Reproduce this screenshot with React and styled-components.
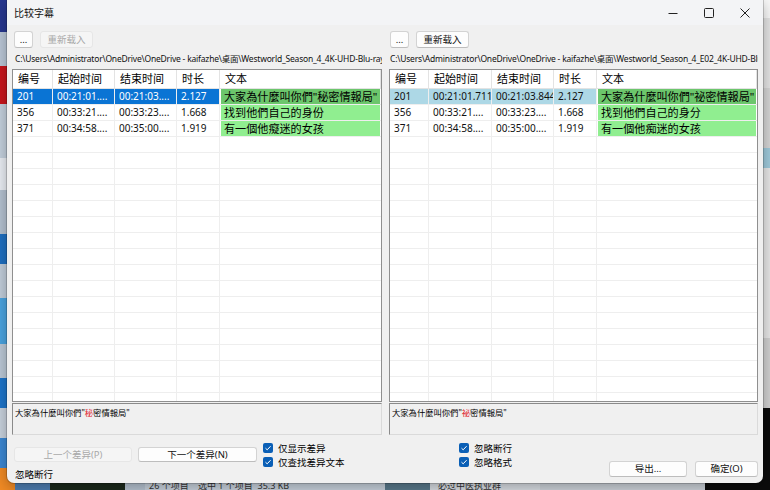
import React from 'react';
import styled, { createGlobalStyle } from 'styled-components';

const GlobalStyle = createGlobalStyle`
  html, body { margin: 0; padding: 0; width: 770px; height: 490px; overflow: hidden; }
  body { font-family: "Noto Sans", "Noto Sans CJK SC", sans-serif; color: #000; }
  #root { width: 770px; height: 490px; }
`;

const CJK = `"Noto Sans", "Noto Sans CJK SC", sans-serif`;

const Desktop = styled.div`
  position: relative;
  width: 770px;
  height: 490px;
  overflow: hidden;
  background: #dde2e8;
`;

const LeftStrip = styled.div`
  position: absolute;
  left: 0; top: 0;
  width: 10px; height: 490px;
  display: flex;
  flex-direction: column;
`;

const RightStrip = styled.div`
  position: absolute;
  right: 0; top: 0;
  width: 12px; height: 490px;
  display: flex;
  flex-direction: column;
`;

const BottomStrip = styled.div`
  position: absolute;
  left: 0; bottom: 0;
  width: 770px; height: 12px;
  display: flex;
`;

const Block = styled.div`
  flex: 0 0 ${p => p.$s}px;
  background: ${p => p.$c};
  font-size: 9px;
  line-height: 16px;
  color: #333;
  white-space: nowrap;
  overflow: hidden;
  padding-left: ${p => p.$pad || 0}px;
  box-sizing: border-box;
  font-family: ${CJK};
`;

const Dialog = styled.div`
  position: absolute;
  left: 7px;
  top: 0;
  width: 756px;
  height: 483px;
  background: #f0f0f0;
  border-radius: 0 0 7px 7px;
  box-shadow: 0 0 0 1px rgba(0,0,0,0.18), 0 4px 14px rgba(0,0,0,0.3);
  display: flex;
  flex-direction: column;
  overflow: hidden;
`;

const TitleBar = styled.div`
  height: 25px;
  flex: 0 0 25px;
  background: #f3f4f6;
  display: flex;
  align-items: center;
  padding-left: 7px;
`;

const Title = styled.div`
  font-family: ${CJK};
  font-size: 10px;
  color: #111;
  flex: 1;
`;

const WinBtn = styled.div`
  width: 36px;
  height: 25px;
  display: flex;
  align-items: center;
  justify-content: center;
`;

const Panels = styled.div`
  display: flex;
  gap: 7px;
  padding: 6px 5px 0 5px;
`;

const Panel = styled.div`
  width: ${p => p.$w}px;
  flex: 0 0 ${p => p.$w}px;
  display: flex;
  flex-direction: column;
  min-width: 0;
`;

const Toolbar = styled.div`
  display: flex;
  gap: 7px;
  padding-left: ${p => p.$pl}px;
  height: 17px;
`;

const Button = styled.button`
  box-sizing: border-box;
  width: ${p => p.$w}px;
  height: ${p => p.$h || 17}px;
  padding: 0;
  font-family: ${CJK};
  font-size: 9.5px;
  line-height: 1;
  color: ${p => (p.disabled ? '#a8a8a8' : '#111')};
  background: ${p => (p.disabled ? '#f5f5f5' : '#fdfdfd')};
  border: 1px solid ${p => (p.disabled ? '#e6e6e6' : '#d3d3d3')};
  border-bottom-color: ${p => (p.disabled ? '#e6e6e6' : '#bdbdbd')};
  border-radius: 3px;
  display: flex;
  align-items: center;
  justify-content: center;
`;

const PathText = styled.div`
  margin-top: 5px;
  height: 12px;
  font-size: 8.5px;
  line-height: 12px;
  letter-spacing: -0.2px;
  white-space: nowrap;
  overflow: hidden;
  padding-left: ${p => p.$pl}px;
  color: #111;
  font-family: ${CJK};
`;

const List = styled.div`
  margin-top: 4px;
  height: 333px;
  box-sizing: border-box;
  border: 1px solid #8f8f8f;
  background: #fff;
  overflow: hidden;
  display: flex;
  flex-direction: column;
`;

const Row = styled.div`
  display: grid;
  grid-template-columns: ${p => p.$cols};
  height: ${p => p.$h}px;
  flex: 0 0 ${p => p.$h}px;
  box-sizing: border-box;
  border-bottom: 1px solid ${p => (p.$header ? '#e3e3e3' : '#eeeeee')};
`;

const HeadCell = styled.div`
  font-family: ${CJK};
  font-size: 11px;
  line-height: 18px;
  padding-left: 5px;
  border-right: 1px solid #e3e3e3;
  white-space: nowrap;
  overflow: hidden;
`;

const Cell = styled.div`
  font-size: 10px;
  line-height: 15px;
  padding-left: 4px;
  border-right: ${p => (p.$last ? 'none' : '1px solid #eeeeee')};
  white-space: nowrap;
  overflow: hidden;
  background: ${p => p.$bg || 'transparent'};
  color: ${p => p.$fg || '#111'};
`;

const TextCell = styled.div`
  font-family: ${CJK};
  font-size: 11.1px;
  line-height: 15px;
  padding-left: 3px;
  margin-left: 1px;
  margin-right: 1px;
  white-space: nowrap;
  overflow: hidden;
  background: ${p => p.$bg || 'transparent'};
`;

const Detail = styled.div`
  margin-top: 1px;
  height: 32px;
  box-sizing: border-box;
  border: 1px solid #dadada;
  border-top-color: #8a8a8a;
  border-left-color: #8a8a8a;
  background: #f0f0f0;
  font-family: ${CJK};
  font-size: 8.3px;
  line-height: 10px;
  padding: 4px 2px;
  white-space: nowrap;
  overflow: hidden;
`;

const Red = styled.span`
  color: #e0202a;
`;

const BottomBar = styled.div`
  flex: 1;
  display: flex;
  padding: 0 5px 0 7px;
`;

const ColA = styled.div`
  width: 243px;
  flex: 0 0 243px;
  display: flex;
  flex-direction: column;
`;

const BtnRow = styled.div`
  margin-top: 12px;
  display: flex;
  gap: 6px;
`;

const BottomLabel = styled.div`
  margin-top: 7px;
  font-family: ${CJK};
  font-size: 9.5px;
  line-height: 12px;
  padding-left: 1px;
`;

const CheckCol = styled.div`
  width: ${p => p.$w}px;
  flex: 0 0 ${p => p.$w}px;
  margin-left: ${p => p.$ml || 0}px;
  padding-top: 6px;
  display: flex;
  flex-direction: column;
`;

const CheckRow = styled.div`
  display: flex;
  align-items: center;
  gap: 5px;
  height: 14px;
  font-family: ${CJK};
  font-size: 9.5px;
`;

const Box = styled.span`
  width: 10px;
  height: 10px;
  border-radius: 2px;
  background: #0a5fb6;
  display: flex;
  align-items: center;
  justify-content: center;
`;

const Actions = styled.div`
  margin-left: auto;
  align-self: flex-end;
  margin-bottom: 6px;
  display: flex;
  gap: 8px;
`;

const Check = ({ label }) => (
  <CheckRow>
    <Box>
      <svg width="8" height="8" viewBox="0 0 8 8">
        <path d="M1.5 4.2 L3.2 5.8 L6.6 2.2" fill="none" stroke="#fff" strokeWidth="1" />
      </svg>
    </Box>
    {label}
  </CheckRow>
);

const leftData = {
  cols: '40px 62px 62px 43px 1fr',
  sel: { bg: '#0a74d4', fg: '#fff' },
  rows: [
    ['201', '00:21:01....', '00:21:03....', '2.127', '大家為什麼叫你們"秘密情報局"'],
    ['356', '00:33:21....', '00:33:23....', '1.668', '找到他們自己的身份'],
    ['371', '00:34:58....', '00:35:00....', '1.919', '有一個他癡迷的女孩'],
  ],
  path: 'C:\\Users\\Administrator\\OneDrive\\OneDrive - kaifazhe\\桌面\\Westworld_Season_4_4K-UHD-Blu-ray_Dolby',
};

const rightData = {
  cols: '39px 63px 62px 43px 1fr',
  sel: { bg: '#add8e6', fg: '#111' },
  rows: [
    ['201', '00:21:01.711', '00:21:03.844', '2.127', '大家為什麼叫你們"祕密情報局"'],
    ['356', '00:33:21....', '00:33:23....', '1.668', '找到他們自己的身分'],
    ['371', '00:34:58....', '00:35:00....', '1.919', '有一個他痴迷的女孩'],
  ],
  path: 'C:\\Users\\Administrator\\OneDrive\\OneDrive - kaifazhe\\桌面\\Westworld_Season_4_E02_4K-UHD-Blu-ray',
};

const headers = ['编号', '起始时间', '结束时间', '时长', '文本'];

const SubPanel = ({ w, pl, pathPl, enabledReload, data, secondChar }) => (
  <Panel $w={w}>
    <Toolbar $pl={pl}>
      <Button $w={19}>...</Button>
      <Button $w={53} disabled={!enabledReload}>重新载入</Button>
    </Toolbar>
    <PathText $pl={pathPl}>{data.path}</PathText>
    <List>
      <Row $cols={data.cols} $h={19} $header>
        {headers.map(h => (
          <HeadCell key={h}>{h}</HeadCell>
        ))}
      </Row>
      {data.rows.map((r, i) => {
        const selected = i === 0;
        return (
          <Row key={r[0]} $cols={data.cols} $h={16}>
            {r.slice(0, 4).map((c, j) => (
              <Cell
                key={j}
                $bg={selected ? data.sel.bg : undefined}
                $fg={selected ? data.sel.fg : undefined}
              >
                {c}
              </Cell>
            ))}
            <TextCell $bg={selected ? '#6cc66c' : '#90ee90'}>{r[4]}</TextCell>
          </Row>
        );
      })}
      {Array.from({ length: 18 }).map((_, i) => (
        <Row key={'e' + i} $cols={data.cols} $h={16}>
          <Cell /><Cell /><Cell /><Cell /><Cell $last />
        </Row>
      ))}
    </List>
    <Detail>
      大家為什麼叫你們"<Red>{secondChar}</Red>密情報局"
    </Detail>
  </Panel>
);

export default function App() {
  return (
    <>
      <GlobalStyle />
      <Desktop>
        <LeftStrip>
          <Block $s={32} $c="#27378f" />
          <Block $s={34} $c="#b9c6d6" />
          <Block $s={38} $c="#c8161d" />
          <Block $s={54} $c="#c3cfdc" />
          <Block $s={32} $c="#e8ecf2" />
          <Block $s={44} $c="#b3c0cf" />
          <Block $s={30} $c="#1f6fc0" />
          <Block $s={34} $c="#c0ccd9" />
          <Block $s={46} $c="#4aa3df" />
          <Block $s={34} $c="#bac7d5" />
          <Block $s={30} $c="#1d74c9" />
          <Block $s={30} $c="#c7d1dc" />
          <Block $s={30} $c="#3b87d2" />
          <Block $s={22} $c="#f08a24" />
        </LeftStrip>
        <RightStrip>
          <Block $s={18} $c="#f7f7f7" />
          <Block $s={70} $c="#e3e3e3" />
          <Block $s={60} $c="#d4d4d4" />
          <Block $s={20} $c="#9ec9da" />
          <Block $s={170} $c="#e6e6e6" />
          <Block $s={70} $c="#cfcfcf" />
          <Block $s={82} $c="#0c0c0c" />
        </RightStrip>
        <BottomStrip>
          <Block $s={15} $c="#f08a24" />
          <Block $s={35} $c="#4f7fb3" />
          <Block $s={75} $c="#1d2a1c" />
          <Block $s={20} $c="#b7c4d2" />
          <Block $s={240} $c="#c8d2dd" $pad={4}>26 个项目 &nbsp;&nbsp; 选中 1 个项目 &nbsp;35.3 KB</Block>
          <Block $s={45} $c="#5a7a8c" />
          <Block $s={110} $c="#d9dee4" $pad={8}>必过中医执业群</Block>
          <Block $s={165} $c="#cdd3da" />
          <Block $s={65} $c="#0c0c0c" />
        </BottomStrip>

        <Dialog>
          <TitleBar>
            <Title>比较字幕</Title>
            <WinBtn>
              <svg width="10" height="10" viewBox="0 0 10 10">
                <path d="M0.5 5.5 H9.5" stroke="#222" strokeWidth="1" />
              </svg>
            </WinBtn>
            <WinBtn>
              <svg width="10" height="10" viewBox="0 0 10 10">
                <rect x="0.5" y="0.5" width="9" height="9" rx="1" fill="none" stroke="#222" strokeWidth="1" />
              </svg>
            </WinBtn>
            <WinBtn>
              <svg width="10" height="10" viewBox="0 0 10 10">
                <path d="M0.5 0.5 L9.5 9.5 M9.5 0.5 L0.5 9.5" stroke="#222" strokeWidth="1" />
              </svg>
            </WinBtn>
          </TitleBar>

          <Panels>
            <SubPanel w={370} pl={2} pathPl={3} enabledReload={false} data={leftData} secondChar="秘" />
            <SubPanel w={369} pl={1} pathPl={1} enabledReload={true} data={rightData} secondChar="祕" />
          </Panels>

          <BottomBar>
            <ColA>
              <BtnRow>
                <Button $w={118} $h={15} disabled>上一个差异(P)</Button>
                <Button $w={119} $h={15}>下一个差异(N)</Button>
              </BtnRow>
              <BottomLabel>忽略断行</BottomLabel>
            </ColA>
            <CheckCol $w={196} $ml={6}>
              <Check label="仅显示差异" />
              <Check label="仅查找差异文本" />
            </CheckCol>
            <CheckCol $w={120}>
              <Check label="忽略断行" />
              <Check label="忽略格式" />
            </CheckCol>
            <Actions>
              <Button $w={78} $h={16}>导出...</Button>
              <Button $w={63} $h={16}>确定(O)</Button>
            </Actions>
          </BottomBar>
        </Dialog>
      </Desktop>
    </>
  );
}
